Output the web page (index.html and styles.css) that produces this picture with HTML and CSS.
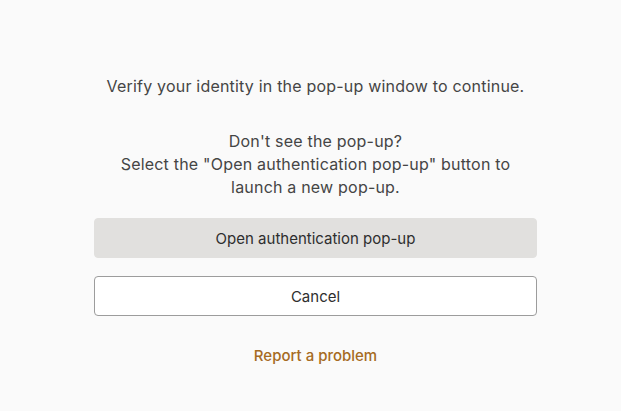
FILE: index.html
```html
<!DOCTYPE html>
<html lang="en">
<head>
<meta charset="utf-8">
<link rel="stylesheet" href="styles.css">
</head>
<body>
<main class="page">
  <section class="card">
    <p class="msg">Verify your identity in the pop-up window to continue.</p>
    <p class="msg second">Don't see the pop-up?<br>Select the "Open authentication pop-up" button to<br>launch a new pop-up.</p>
    <div class="actions">
      <button class="btn primary" type="button">Open authentication pop-up</button>
      <button class="btn secondary" type="button">Cancel</button>
    </div>
    <a class="report" href="#">Report a problem</a>
  </section>
</main>
</body>
</html>
```
FILE: styles.css
```css
html, body {
  margin: 0;
  padding: 0;
  background: #fafafa;
}
body {
  font-family: Inter, "Noto Sans", sans-serif;
  color: #454545;
  font-size: 15px;
}
.page {
  display: flex;
  justify-content: center;
  padding: 75px 0 0 10px;
}
.card {
  width: 443px;
  display: flex;
  flex-direction: column;
  align-items: stretch;
  text-align: center;
}
.msg {
  margin: 0;
  font-size: 16px;
  letter-spacing: 0.2px;
  line-height: 23px;
}
.second {
  margin-top: 32px;
}
.actions {
  display: flex;
  flex-direction: column;
  gap: 18px;
  margin-top: 19px;
}
.btn {
  font-family: inherit;
  font-size: 15px;
  color: #2e2e2e;
  height: 40px;
  border-radius: 4px;
  cursor: pointer;
}
.primary {
  background: #e1e0de;
  border: 1px solid #e1e0de;
}
.secondary {
  background: #ffffff;
  border: 1px solid #9c9c9c;
}
.report {
  margin-top: 30px;
  color: #a66a22;
  text-decoration: none;
  font-weight: 500;
  align-self: center;
}
```
